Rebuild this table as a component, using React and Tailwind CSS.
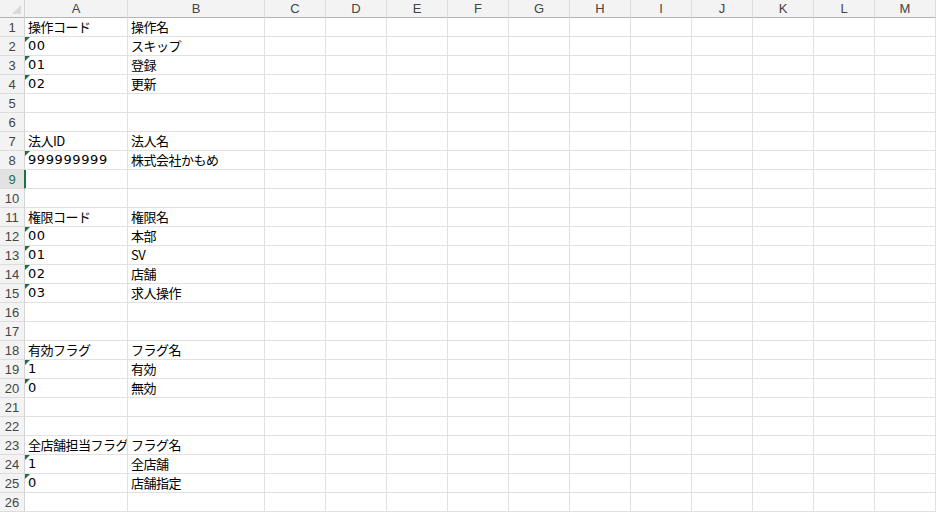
import React from 'react';

const COLS = ['A', 'B', 'C', 'D', 'E', 'F', 'G', 'H', 'I', 'J', 'K', 'L', 'M'];

// row number -> [A, B, flagged (green triangle on A)]
const DATA = {
  1: ['操作コード', '操作名'],
  2: ['00', 'スキップ', true],
  3: ['01', '登録', true],
  4: ['02', '更新', true],
  7: ['法人ID', '法人名'],
  8: ['999999999', '株式会社かもめ', true],
  11: ['権限コード', '権限名'],
  12: ['00', '本部', true],
  13: ['01', 'SV', true],
  14: ['02', '店舗', true],
  15: ['03', '求人操作', true],
  18: ['有効フラグ', 'フラグ名'],
  19: ['1', '有効', true],
  20: ['0', '無効', true],
  23: ['全店舗担当フラグ', 'フラグ名'],
  24: ['1', '全店舗', true],
  25: ['0', '店舗指定', true],
};

const ACTIVE_ROW = 9;

function CellText({ value }) {
  if (!value) return null;
  const numeric = /^[0-9]+$/.test(value);
  return (
    <span
      className={
        numeric
          ? "font-['DejaVu_Sans','Noto_Sans_CJK_JP',sans-serif] tracking-[0.6px]"
          : "font-['Noto_Sans_CJK_JP',sans-serif] tracking-[-0.5px]"
      }
    >
      {value}
    </span>
  );
}

function Flag() {
  return (
    <svg className="absolute left-0 top-0" width="5" height="5" viewBox="0 0 5 5">
      <polygon points="0,0 5,0 0,5" fill="#1e7145" />
    </svg>
  );
}

export default function App() {
  const rows = Array.from({ length: 26 }, (_, i) => i + 1);

  return (
    <div className="w-[937px] h-[512px] overflow-hidden bg-white text-[13px] text-black">
      <div className="grid grid-cols-[25px_103px_137px_repeat(11,61px)] grid-rows-[18px_repeat(26,19px)]">
        {/* corner */}
        <div className="relative bg-[#f3f3f3] border-r border-b border-r-[#d4d4d4] border-b-[#b5b5b5]">
          <svg className="absolute left-[12px] top-[5px]" width="9" height="9" viewBox="0 0 9 9">
            <polygon points="9,0 9,9 0,9" fill="#d9d9d9" />
          </svg>
        </div>

        {/* column headers */}
        {COLS.map((c) => (
          <div
            key={c}
            className="flex items-center justify-center bg-[#f3f3f3] border-r border-b border-r-[#dcdcdc] border-b-[#b5b5b5] font-['Liberation_Sans',sans-serif] text-[13px] text-[#444] leading-none"
          >
            {c}
          </div>
        ))}

        {rows.map((r) => {
          const d = DATA[r] || [];
          const active = r === ACTIVE_ROW;
          return (
            <React.Fragment key={r}>
              <div
                className={
                  active
                    ? "flex items-center justify-center bg-[#e2e2e2] border-b border-r border-b-[#dcdcdc] border-r-[#1e7145] font-['Liberation_Sans',sans-serif] text-[13px] text-[#1e7145] leading-none"
                    : "flex items-center justify-center bg-[#f3f3f3] border-b border-r border-b-[#dcdcdc] border-r-[#d4d4d4] font-['Liberation_Sans',sans-serif] text-[13px] text-[#444] leading-none"
                }
              >
                {r}
              </div>
              {COLS.map((c, ci) => {
                const value = ci === 0 ? d[0] : ci === 1 ? d[1] : null;
                return (
                  <div
                    key={c}
                    className={
                      'relative flex items-center whitespace-nowrap overflow-hidden pl-[3px] border-r border-b border-[#e1e1e1] leading-[18px] ' +
                      (active && ci === 0 ? 'shadow-[inset_1px_0_0_#1e7145]' : '')
                    }
                  >
                    {ci === 0 && d[2] && <Flag />}
                    <CellText value={value} />
                  </div>
                );
              })}
            </React.Fragment>
          );
        })}
      </div>
    </div>
  );
}
